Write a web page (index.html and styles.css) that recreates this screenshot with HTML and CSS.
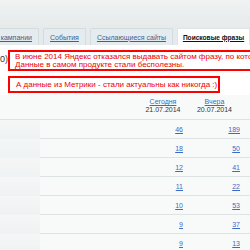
FILE: index.html
```html
<!DOCTYPE html>
<html lang="ru">
<head>
    <meta charset="UTF-8">
    <title>Поисковые фразы</title>
    <link rel="stylesheet" href="styles.css">
</head>
<body>
    <div class="top"></div>

    <div class="tabs">
        <a class="tab tab-first">Рекламные кампании</a>
        <a class="tab">События</a>
        <a class="tab">Ссылающиеся сайты</a>
        <a class="tab active">Поисковые фразы</a>
        <a class="tab">Браузеры</a>
    </div>

    <div class="notice">
        <div class="count">0)</div>
        <div class="boxes">
            <div class="redbox wide">
                В июне 2014 Яндекс отказался выдавать сайтом фразу, по которой пришёл посетитель.<br>
                Данные в самом продукте стали бесполезны.
            </div>
            <div class="redbox single">
                А данные из Метрики - стали актуальны как никогда :)
            </div>
        </div>
    </div>

    <div class="report">
        <div class="row head">
            <div class="cell side"></div>
            <div class="cell"></div>
            <div class="cell day"><a href="#">Сегодня</a><span>21.07.2014</span></div>
            <div class="cell day"><a href="#">Вчера</a><span>20.07.2014</span></div>
            <div class="cell"></div>
        </div>
        <div class="row">
            <div class="cell side"></div><div class="cell"></div>
            <div class="cell num"><a href="#">46</a></div><div class="cell num"><a href="#">189</a></div><div class="cell"></div>
        </div>
        <div class="row">
            <div class="cell side"></div><div class="cell"></div>
            <div class="cell num"><a href="#">18</a></div><div class="cell num"><a href="#">50</a></div><div class="cell"></div>
        </div>
        <div class="row">
            <div class="cell side"></div><div class="cell"></div>
            <div class="cell num"><a href="#">12</a></div><div class="cell num"><a href="#">41</a></div><div class="cell"></div>
        </div>
        <div class="row">
            <div class="cell side"></div><div class="cell"></div>
            <div class="cell num"><a href="#">11</a></div><div class="cell num"><a href="#">22</a></div><div class="cell"></div>
        </div>
        <div class="row">
            <div class="cell side"></div><div class="cell"></div>
            <div class="cell num"><a href="#">10</a></div><div class="cell num"><a href="#">53</a></div><div class="cell"></div>
        </div>
        <div class="row">
            <div class="cell side"></div><div class="cell"></div>
            <div class="cell num"><a href="#">9</a></div><div class="cell num"><a href="#">37</a></div><div class="cell"></div>
        </div>
        <div class="row">
            <div class="cell side"></div><div class="cell"></div>
            <div class="cell num"><a href="#">9</a></div><div class="cell num"><a href="#">13</a></div><div class="cell"></div>
        </div>
    </div>
</body>
</html>
```

FILE: styles.css
```css
body {
    margin: 0;
    width: 250px;
    overflow: hidden;
    font-family: "Liberation Sans", Arial, sans-serif;
    font-size: 8px;
    color: #222;
    background: #fff;
}
.top {
    height: 28px;
    background: linear-gradient(#f1f3f3, #e6eaea);
}
.tabs {
    display: flex;
    gap: 4px;
    height: 17px;
    margin-left: -40px;
    background: #e6eaea;
    white-space: nowrap;
}
.tab {
    display: flex;
    align-items: center;
    padding: 0 6px;
    background: #e4ecef;
    border: 1px solid #d3dde0;
    border-bottom: none;
    border-radius: 2px 2px 0 0;
    color: #3d5f95;
    font-size: 7px;
}
.tab-first {
    width: 65px;
    justify-content: flex-end;
}
.tab.active {
    width: 59px;
    justify-content: center;
    background: #fff;
    color: #111;
    font-size: 6.6px;
    font-weight: bold;
    border-color: #dfe4e4;
}
.notice {
    display: flex;
    height: 50px;
    background: #fff;
}
.count {
    width: 31px;
    padding-top: 9px;
    font-size: 9px;
    color: #333;
}
.boxes {
    display: flex;
    flex-direction: column;
    gap: 5px;
    padding-top: 5px;
}
.redbox {
    width: 196px;
    border: 2px solid #f00;
    padding: 0 5px;
    color: #e00;
    line-height: 8px;
    white-space: nowrap;
    overflow: hidden;
}
.redbox.wide {
    width: 260px;
    padding-top: 1px;
}
.redbox.single {
    padding: 2px 6px;
    line-height: 9px;
}
.report {
    width: 290px;
}
.row {
    display: grid;
    grid-template-columns: 40px 100px 46px 57px 47px;
    height: 19px;
    background: #f8fafa;
}
.row .cell {
    border-bottom: 1px solid #dee3e3;
}
.row .side {
    border-bottom: none;
    background: linear-gradient(#f5f7f7, #eff2f2);
}
.row.head {
    height: 25px;
}
.row.head .cell {
    border-bottom: 1px solid #dee3e3;
    background: #f8fafa;
}
.day {
    display: flex;
    flex-direction: column;
    align-items: center;
    padding-top: 3px;
    line-height: 8px;
    font-size: 7px;
}
.day span {
    color: #333;
}
.num {
    display: flex;
    align-items: center;
    justify-content: flex-end;
    padding-right: 3px;
    font-size: 7px;
}
a {
    color: #3a6cc6;
    text-decoration: underline;
}
```
